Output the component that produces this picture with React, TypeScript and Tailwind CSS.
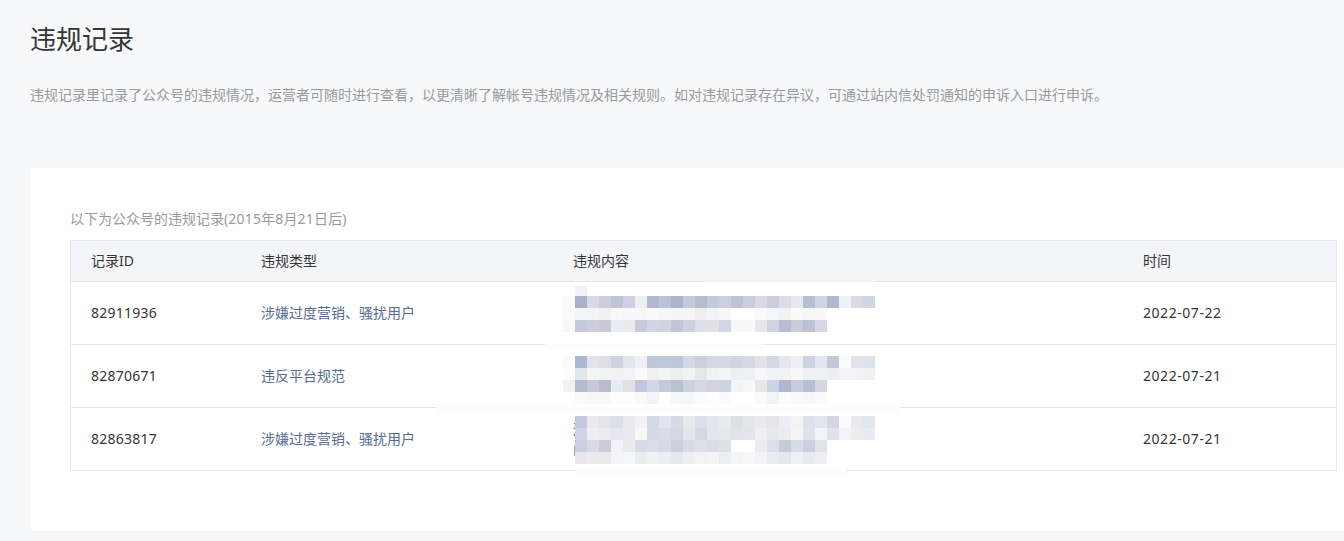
// 违规记录页面
import React from 'react';

const font = "font-['Noto_Sans','Noto_Sans_CJK_SC',sans-serif]";

// 内容列的打码马赛克，每格 12px
const mosaicA = [
  ['fbfaf8', 'a5b1cd', 'd8d9e5', 'c9ced9', 'bfc4d8', 'cdd1e3', 'eeeeef', 'b1b9d0', 'bcc3d5', 'adb3ca', 'c6c9d7', 'b7bdd1', 'c4cbdb', 'cdd0dc', 'bdc5d4', 'c8cedc', 'd9dae4', 'cccdda', 'd8dde9', 'e9e8eb', 'b6c0d4', 'cfd5e2', 'b2b9cd', 'eef2f7', 'd9dae3', 'cfd7e3'],
  ['fafafa', 'f2f3f5', 'f3f4f6', 'f1f1f2', 'f8f9fb', 'f6f6f8', 'f6f7f9', 'fafafa', 'f5f6f8', 'f4f5f6', 'f5f5f6', 'eeeff1', 'f3f4f7', 'f6f7fa', 'ffffff', 'ffffff', 'fafafa', 'f5f6f9', 'f2f3f6', 'fafafa', 'f5f6f8', 'f8f8f9'],
  ['f6f7f9', 'c2c9d9', 'c9ced9', 'cbc9d8', 'e8ecf4', 'ebebec', 'c9cadb', 'd2d5e2', 'd1d3e0', 'c5c6d4', 'cdd3e0', 'dde0e9', 'e2e0e7', 'd0d8e5', 'f6f7f9', 'f8f8fa', 'e7e6ea', 'cfd3e2', 'b6bdd4', 'cbcada', 'bac3d5', 'd5d8e4'],
];

const mosaicB = [
  ['fbfaf8', 'abb8d2', 'e0e2ec', 'dddee3', 'cdd1e0', 'dfe4ee', 'f0f0f2', 'bfc7da', 'bfc9da', 'bfc8da', 'd5d7e2', 'cad0de', 'd4d8e3', 'd4d8e4', 'cfd5e2', 'd6d9e5', 'e2e3e9', 'd5d7e2', 'e2e7f0', 'efeef1', 'c9d3e2', 'e2e6ef', 'c3c9d9', 'fafbfd', 'e2e2e9', 'dbe2ed'],
  ['fcfcfc', 'e1e7ef', 'f3f4f7', 'f1f2f5', 'f1f1f5', 'f1f3f6', 'fbfbfb', 'eff0f4', 'f2f3f5', 'eceef1', 'f2f3f5', 'e6e7eb', 'f0f2f6', 'f4f5f6', 'edeff3', 'eef0f4', 'f6f7f8', 'f1f2f5', 'f0f2f5', 'f8f8f9', 'eef0f4', 'eff1f5', 'edeff3', 'f3f4f7', 'f2f3f6', 'f0f1f5'],
  ['f2f2f5', 'b4bad2', 'c5c8d8', 'bbbbcc', 'e6ecf5', 'e3e0e5', 'bec7db', 'd3d7e4', 'c3cbdb', 'bac1d1', 'cdd2e0', 'd5d8e3', 'd3d3df', 'ccd3e2', 'f3f4f8', 'f6f7fa', 'e7e7e9', 'ccd3e1', 'b0b8d1', 'cacada', 'b7bed5', 'd3d6e3'],
  ['ffffff', 'fafafb', 'f8f8f9', 'f7f8fa', 'fcfcfd', 'fcfcfc', 'f9f9fa', 'f1f3f8', 'ffffff', 'f6f7f9', 'f5f6f9', 'fafbfc', 'fdfdfd', 'f8fafc', 'ffffff', 'ffffff', 'fafafb', 'f1f3f8', 'fbfcfe', 'f9f9fb', 'f6f7f9', 'f9fafc'],
];

const mosaicC = [
  ['c2c9dc', 'e9e9ef', 'e3e4ea', 'dcdfe9', 'e9eaf0', 'f2f2f4', 'd5d9e6', 'e1e5ee', 'd7dae5', 'e8e7ea', 'dcdfe9', 'e2e5ef', 'e9eaee', 'dee0e8', 'e5e6ec', 'e9eaee', 'e5e4e9', 'ebeef3', 'f3f3f4', 'dde1ec', 'e2e5ee', 'd4d6e3', 'fbfbfd', 'ebe9ee', 'e2e6ef'],
  ['cfd5e6', 'efeef2', 'ecebef', 'e7e8ed', 'e9eaef', 'f8f8f8', 'd5dae7', 'd7dce8', 'd5d8e3', 'e6e6e9', 'd5d7e3', 'e3e6ef', 'e7e8ee', 'e2e3e9', 'e3e4e9', 'f0f0f3', 'e8e9ed', 'ebecf0', 'f5f5f5', 'dfe3ed', 'f2f3f6', 'e2e3e9', 'f2f3f7', 'edecf1', 'e8ebf1'],
  ['cbcfdf', 'd9dbe3', 'cdcbd9', 'f0f3fa', 'ebebec', 'd6dbe6', 'd9dde8', 'd7dae6', 'cdcfdc', 'd8dbe6', 'dde0e9', 'dcdce6', 'dbe0ea', 'ffffff', 'ffffff', 'ecebee', 'dcdfe8', 'c4cbdb', 'dbdbe4', 'cbd0de', 'e0e3eb'],
  ['e7e8ed', 'ebeaef', 'ebeaee', 'f5f5f8', 'f5f6f8', 'ecedf1', 'f0f1f5', 'ecedf2', 'e7e8ed', 'eeeff3', 'f3f3f7', 'f5f5f8', 'ecedf2', 'f4f5f7', 'f7f8fa', 'f2f3f5', 'ebecf1', 'e6e7ee', 'eff0f3', 'e9eaef', 'eeeff3'],
];

function Mosaic({ lines, className }: { lines: string[][]; className: string }) {
  return (
    <div className={`absolute flex flex-col ${className}`}>
      {lines.map((line, i) => (
        <div key={i} className="flex h-3">
          {line.map((c, j) => (
            <div key={j} className="h-3 w-3" style={{ backgroundColor: `#${c}` }} />
          ))}
        </div>
      ))}
    </div>
  );
}

const rows = [
  { id: '82911936', type: '涉嫌过度营销、骚扰用户', time: '2022-07-22', lines: mosaicA, pos: '-left-[10px] top-[14px]', peek: false },
  { id: '82870671', type: '违反平台规范', time: '2022-07-21', lines: mosaicB, pos: '-left-[10px] top-[11px]', peek: false },
  { id: '82863817', type: '涉嫌过度营销、骚扰用户', time: '2022-07-21', lines: mosaicC, pos: 'left-[2px] top-[8px]', peek: true },
];

export default function App() {
  return (
    <div className={`h-[541px] w-[1344px] overflow-hidden bg-[#f6f8f9] pl-[30px] pt-[24px] ${font}`}>
      <h1 className="text-[26px] font-normal leading-[30px] text-[#353535]">违规记录</h1>
      <p className="mt-[31px] text-[14px] leading-[20px] text-[#9a9a9a]">
        违规记录里记录了公众号的违规情况，运营者可随时进行查看，以更清晰了解帐号违规情况及相关规则。如对违规记录存在异议，可通过站内信处罚通知的申诉入口进行申诉。
      </p>

      <div className="mt-[63px] h-[363px] rounded-l-[3px] bg-white pl-[40px] pt-[41px] shadow-[0_1px_2px_rgba(150,150,150,0.08)]">
        <p className="text-[14px] leading-[20px] text-[#9a9a9a]">
          以下为公众号的违规记录<span className="tracking-[0.17px]">(2015年8月21日后)</span>
        </p>

        <div className="relative mt-[11px] w-[1267px] border border-[#e7e7eb] text-[14px] text-[#353535]">
          <div className="grid h-[40px] grid-cols-[170px_312px_570px_1fr] items-center bg-[#f4f5f9] pb-[2px] pl-[20px]">
            <div>记录ID</div>
            <div>违规类型</div>
            <div>违规内容</div>
            <div>时间</div>
          </div>
          {rows.map((r) => (
            <div key={r.id} className="grid h-[63px] grid-cols-[170px_312px_570px_1fr] items-center border-t border-[#e7e7eb] pb-[2px] pl-[20px]">
              <div className="tracking-[0.25px]">{r.id}</div>
              <div className="text-[#576b95]">{r.type}</div>
              <div className="relative h-[61px]">
                {r.peek && (
                  <div className="mt-[11px] w-[14px] overflow-hidden leading-[20px]">
                    <div className="text-[#353535]">违</div>
                    <div className="text-[#2f7ad0]">阅</div>
                  </div>
                )}
                <Mosaic lines={r.lines} className={r.pos} />
                {r.id === '82911936' && (
                  <div className="absolute left-[2px] top-[4px] h-[10px] w-3 bg-[#f1f2f6]" />
                )}
              </div>
              <div className="tracking-[0.55px]">{r.time}</div>
            </div>
          ))}

          {/* 打码时盖住分隔线的白色涂抹 */}
          <div className="absolute left-[634px] top-[40px] h-px w-[170px] bg-[#f0f0f4]" />
          <div className="absolute left-[474px] top-[103px] h-[3px] w-[216px] bg-[#fdfdfd]" />
          <div className="absolute left-[366px] top-[165px] h-[8px] w-[464px] bg-[#fdfdfd]" />
          <div className="absolute left-[505px] top-[228px] h-[6px] w-[270px] bg-[#fdfdfd]" />
        </div>
      </div>
    </div>
  );
}
